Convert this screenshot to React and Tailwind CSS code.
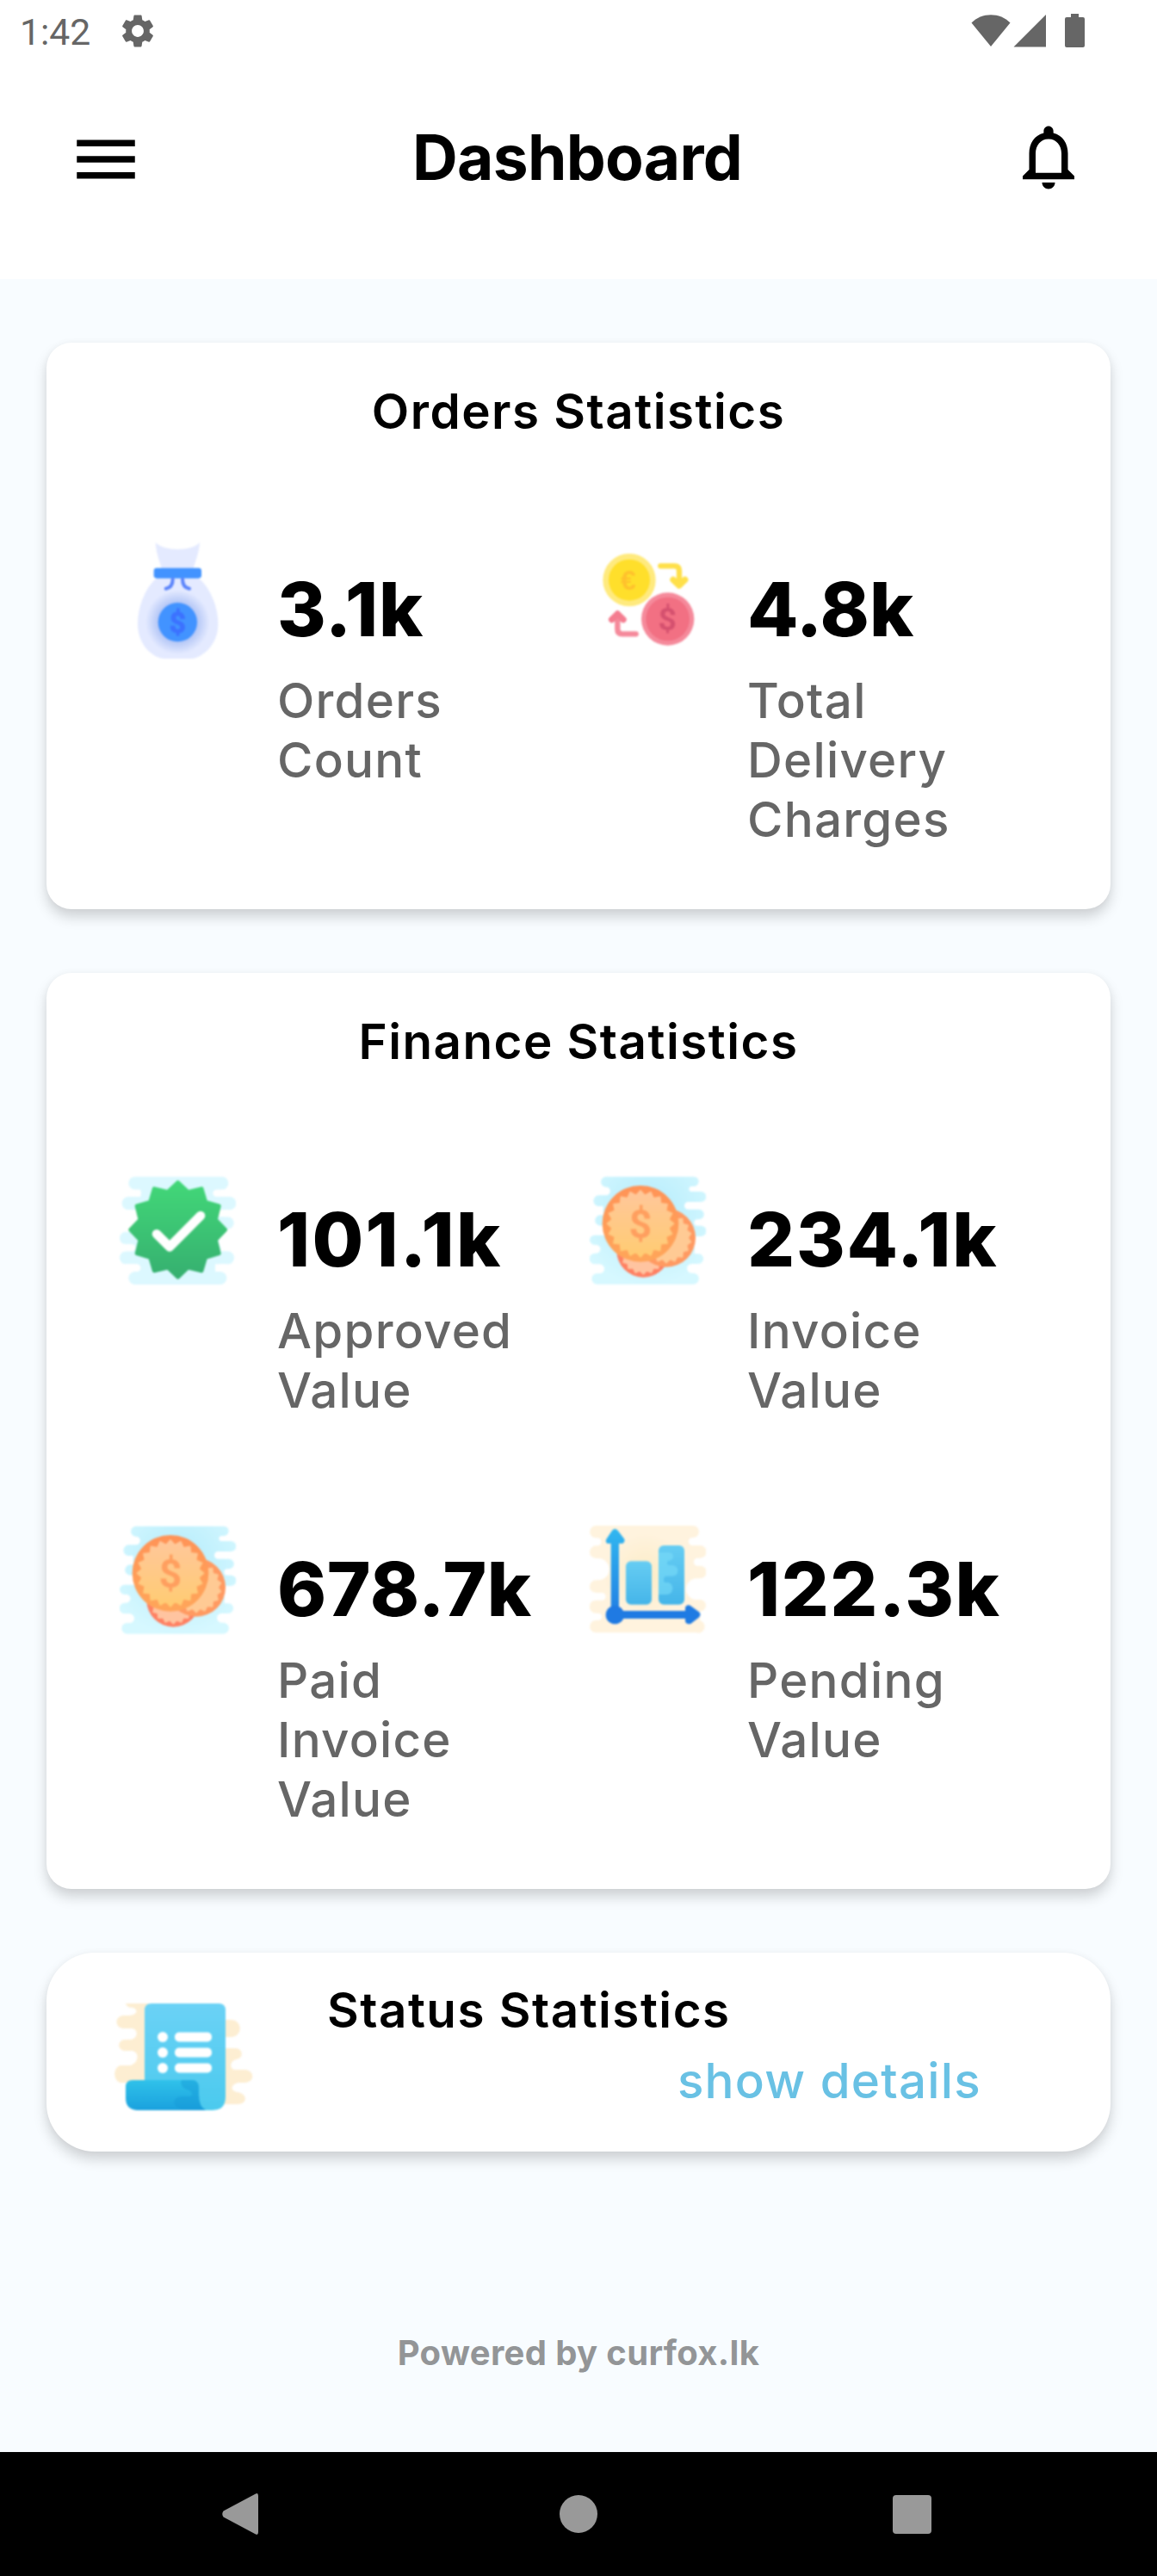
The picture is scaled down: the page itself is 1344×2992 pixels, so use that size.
import React from "react";
import { MdSettings, MdMenu, MdNotificationsNone } from "react-icons/md";

function starburst(cx, cy, outer, inner, teeth) {
  const points = [];
  for (let i = 0; i < teeth * 2; i++) {
    const r = i % 2 === 0 ? outer : inner;
    const a = (Math.PI * i) / teeth - Math.PI / 2;
    points.push(`${(cx + r * Math.cos(a)).toFixed(1)},${(cy + r * Math.sin(a)).toFixed(1)}`);
  }
  return points.join(" ");
}

/* Horizontal rounded bars [x1, x2, y1, y2] that form the wavy backdrop of an icon. */
function Bars({ bars, fill }) {
  return bars.map(([x1, x2, y1, y2], i) => (
    <rect key={i} x={x1} y={y1} width={x2 - x1} height={y2 - y1} rx={(y2 - y1) / 2} fill={fill} />
  ));
}

function MoneyBagIcon() {
  return (
    <svg viewBox="27 60 405 405" className="size-[135px] blur-[0.8px]">
      <defs>
        <radialGradient id="bagGlow" cx="229" cy="338" r="112" gradientUnits="userSpaceOnUse">
          <stop offset="0.6" stopColor="#b3c6f6" />
          <stop offset="1" stopColor="#e4eaff" />
        </radialGradient>
      </defs>
      <path d="M152 60C178 92 282 92 306 60C304 100 288 130 282 160H176C168 130 154 100 152 60Z" fill="#e4eaff" />
      <path d="M158 182H300C340 215 370 280 370 345C370 420 310 466 270 466H190C145 466 90 420 90 345C90 280 118 215 158 182Z" fill="#e4eaff" />
      <circle cx="229" cy="338" r="112" fill="url(#bagGlow)" />
      <rect x="146" y="149" width="166" height="36" rx="10" fill="#4293ff" />
      <path d="M212 188C212 208 204 218 188 221M246 188C246 208 254 218 270 221" fill="none" stroke="#5b84fb" strokeWidth="12" strokeLinecap="round" />
      <circle cx="229" cy="338" r="68" fill="#4293ff" />
      <text x="229" y="374" textAnchor="middle" fontFamily="Roboto" fontWeight="700" fontSize="100" fill="#3c72ff" stroke="#3c72ff" strokeWidth="3">$</text>
    </svg>
  );
}

function ExchangeIcon() {
  return (
    <svg viewBox="15 30 405 405" className="size-[135px] blur-[0.8px]">
      <circle cx="153" cy="161" r="92" fill="#ffea7e" />
      <circle cx="153" cy="161" r="72" fill="#ffdf2b" />
      <text x="150" y="195" textAnchor="middle" fontFamily="Liberation Sans" fontWeight="700" fontSize="96" fill="#ffc12c">€</text>
      <path d="M262 112H310Q327 112 327 129V176" fill="none" stroke="#ffe04a" strokeWidth="19" strokeLinecap="round" />
      <path d="M306 160L327 180L347 160" fill="none" stroke="#ffe04a" strokeWidth="22" strokeLinecap="round" strokeLinejoin="round" />
      <circle cx="287" cy="297" r="92" fill="#f58a9b" />
      <circle cx="287" cy="297" r="76" fill="#f27083" />
      <text x="286" y="336" textAnchor="middle" fontFamily="Roboto" fontWeight="700" fontSize="112" fill="#d5516f">$</text>
      <path d="M176 349H128Q112 349 112 333V282" fill="none" stroke="#f58a9b" strokeWidth="19" strokeLinecap="round" />
      <path d="M92 299L112 279L132 299" fill="none" stroke="#f47d90" strokeWidth="22" strokeLinecap="round" strokeLinejoin="round" />
    </svg>
  );
}

function ApprovedIcon() {
  return (
    <svg viewBox="57 66 405 405" className="size-[135px] blur-[0.8px]">
      <defs>
        <linearGradient id="sealFill" x1="0" y1="0" x2="0" y2="1">
          <stop offset="0" stopColor="#42d778" />
          <stop offset="1" stopColor="#36b070" />
        </linearGradient>
      </defs>
      <path d="M120 82H400V150H385V222H410V345H390V454H120V380H100V310H125V190H130V120H120Z" fill="#dcf8ff" />
      <Bars
        fill="#dcf8ff"
        bars={[
          [88, 436, 80, 125],
          [65, 463, 150, 196],
          [300, 455, 220, 263],
          [57, 300, 272, 316],
          [57, 456, 340, 385],
          [88, 430, 411, 456],
        ]}
      />
      <Bars fill="#ffffff" bars={[[90, 132, 125, 150], [382, 430, 125, 150], [60, 118, 196, 272], [412, 462, 196, 220], [402, 460, 263, 340], [60, 112, 316, 340], [60, 130, 385, 411], [392, 440, 385, 411]]} />
      <polygon points={starburst(260, 265, 165, 136, 12)} fill="url(#sealFill)" stroke="url(#sealFill)" strokeWidth="14" strokeLinejoin="round" />
      <path d="M186 280L231 325L339 216" fill="none" stroke="#fff" strokeWidth="32" strokeLinecap="round" strokeLinejoin="round" />
    </svg>
  );
}

function CoinsIcon() {
  return (
    <svg viewBox="75 66 405 405" className="size-[135px] blur-[0.8px]">
      <defs>
        <radialGradient id="coinSky" cx="280" cy="200" r="260" gradientUnits="userSpaceOnUse">
          <stop offset="0" stopColor="#b4ecfc" />
          <stop offset="1" stopColor="#d6f8ff" />
        </radialGradient>
        <linearGradient id="coinRing" x1="0" y1="0" x2="0" y2="1">
          <stop offset="0" stopColor="#ff9357" />
          <stop offset="1" stopColor="#ffa65a" />
        </linearGradient>
        <linearGradient id="coinFace" x1="0" y1="0" x2="0" y2="1">
          <stop offset="0" stopColor="#ffc79b" />
          <stop offset="1" stopColor="#ffcc72" />
        </linearGradient>
      </defs>
      <path
        d="M132 80H438A16 16 0 0 1 438 114H430A9 9 0 0 0 430 132H463A18 18 0 0 1 463 168H418A12 12 0 0 0 418 194H456A17 17 0 0 1 456 229H450A11 11 0 0 0 450 251H463A18 18 0 0 1 463 288H440V349H454A17 17 0 0 1 454 384H430A16 16 0 0 0 430 416H436A19 19 0 0 1 436 455H101A19 19 0 0 1 101 417H110A16 16 0 0 0 110 385H93A18 18 0 0 1 93 347H98A14 14 0 0 0 98 318H92A17 17 0 0 1 92 284H130V251H112A18 18 0 0 1 112 214H122V183H107A19 19 0 0 1 107 145H132A14 14 0 0 0 132 116A18 18 0 0 1 132 80Z"
        fill="url(#coinSky)"
      />
      <circle cx="262" cy="338" r="93" fill="#ff8163" />
      <polygon points={starburst(262, 338, 84, 73, 18)} fill="#ffc4a0" />
      <circle cx="342" cy="293" r="102" fill="#ff9a62" />
      <polygon points={starburst(342, 293, 90, 78, 18)} fill="#ffca94" />
      <circle cx="252" cy="244" r="133" fill="url(#coinRing)" />
      <polygon points={starburst(252, 244, 116, 100, 20)} fill="url(#coinFace)" stroke="url(#coinFace)" strokeWidth="4" strokeLinejoin="round" />
      <text x="252" y="294" textAnchor="middle" fontFamily="Roboto" fontWeight="700" fontSize="140" fill="#ff9f5f">$</text>
    </svg>
  );
}

function ChartIcon() {
  return (
    <svg viewBox="75 84 405 405" className="size-[135px] blur-[0.8px]">
      <defs>
        <radialGradient id="chartSand" cx="270" cy="270" r="210" gradientUnits="userSpaceOnUse">
          <stop offset="0" stopColor="#fcecc6" />
          <stop offset="0.7" stopColor="#fff3de" />
          <stop offset="1" stopColor="#fff3de" />
        </radialGradient>
        <linearGradient id="axisFill" x1="0" y1="105" x2="0" y2="440" gradientUnits="userSpaceOnUse">
          <stop offset="0" stopColor="#32b8f0" />
          <stop offset="1" stopColor="#1f78e2" />
        </linearGradient>
        <linearGradient id="barFill" x1="0" y1="0" x2="0" y2="1">
          <stop offset="0" stopColor="#66cdf3" />
          <stop offset="1" stopColor="#45b5e9" />
        </linearGradient>
      </defs>
      <path
        d="M97 96H435A21 21 0 0 1 435 138H430A14 14 0 0 0 430 165H460A22 22 0 0 1 460 209H448A14 14 0 0 0 448 236H460A22 22 0 0 1 460 280H448A36 36 0 0 0 448 354H460A20 20 0 0 1 460 394V427A21 21 0 0 1 448 469H97A21 21 0 0 1 97 426H105A12 12 0 0 0 105 401H97A22 22 0 0 1 97 356H118A13 13 0 0 0 118 330H97A22 22 0 0 1 97 286H105A37 37 0 0 0 105 210H97A22 22 0 0 1 97 166H105A14 14 0 0 0 105 139H97A21 21 0 0 1 97 96Z"
        fill="url(#chartSand)"
      />
      <path d="M149 390V158H136Q128 152 134 142L154 112Q163 102 172 112L195 142Q200 152 190 158H177V390Z" fill="url(#axisFill)" />
      <circle cx="163" cy="407" r="32" fill="#1f7ae3" />
      <path d="M180 393H408V382Q412 370 425 374L455 396Q466 405 455 416L427 438Q412 442 408 430V420H180Z" fill="#1f7be3" />
      <rect x="201" y="220" width="90" height="151" rx="18" fill="url(#barFill)" />
      <rect x="315" y="165" width="90" height="206" rx="18" fill="url(#barFill)" />
      <path d="M315 190H352Q366 192 366 204Q366 217 350 218Q340 222 348 234H366Q382 238 382 253Q382 270 364 272H340Q328 278 336 294H348Q364 298 364 316Q362 334 346 336H315Z" fill="#7adcf8" opacity="0.6" />
    </svg>
  );
}

function ReportIcon() {
  return (
    <svg viewBox="0 0 161 124" className="h-[124px] w-[161px] blur-[0.8px]">
      <defs>
        <linearGradient id="paperFill" x1="0" y1="0" x2="0" y2="1">
          <stop offset="0" stopColor="#6bd2f6" />
          <stop offset="1" stopColor="#4bcaee" />
        </linearGradient>
        <linearGradient id="rollFill" x1="0" y1="0" x2="0" y2="1">
          <stop offset="0" stopColor="#30c2ea" />
          <stop offset="1" stopColor="#1aa1de" />
        </linearGradient>
      </defs>
      <path
        d="M13 0H40V92H7C-2 90 -2 74 7 72H18C28 70 30 56 20 55H12C3 54 3 43 12 42H18C28 41 28 30 20 29H10C0 28 0 15 10 14H18C26 13 28 8 22 5Q14 5 13 0Z"
        fill="#fdeed2"
      />
      <path
        d="M124 19H136C149 20 149 38 136 39H129V52H141C150 53 150 64 141 65C134 67 133 76 140 77H152C163 78 163 91 152 92H144C135 94 134 101 142 103C155 104 155 117 143 117H124Z"
        fill="#fdeed2"
      />
      <path d="M35 8Q35 0 43 0H121Q129 0 129 8V108Q129 124 114 124H90L35 95Z" fill="url(#paperFill)" />
      <path d="M13 97Q13 89 21 89H90Q98 89 98 98V106Q98 120 106 124H26Q13 123 13 110Z" fill="url(#rollFill)" />
      <path d="M78 89H90Q98 89 98 98V106Q98 120 106 124H80C66 120 66 109 78 108H88C92 106 90 101 84 100C78 98 76 92 78 89Z" fill="#1799d8" opacity="0.45" />
      {[39, 57, 75].map((y) => (
        <g key={y} fill="#fff">
          <circle cx="56" cy={y} r="6" />
          <rect x="70" y={y - 5.5} width="43" height="11" rx="5" />
        </g>
      ))}
    </svg>
  );
}

function StatusBar() {
  return (
    <div className="flex h-[78px] items-start pt-[12px] pl-[23px] text-[#666666]">
      <span className="w-[83px] font-[Roboto] text-[42.7px] leading-[51px]">1:42</span>
      <MdSettings className="mt-px ml-[31px] size-[46px]" />
      <svg viewBox="0 0 132 40" className="mt-[4px] mr-[84px] ml-auto h-[40px] w-[132px]" fill="currentColor">
        <path d="M0.500 10.500C12 -2 34 -2 45.500 10.500L23 38Z" />
        <path d="M87 1V38.500H49.500Z" />
        <path d="M116 0H125V4H130Q132 4 132 6V37Q132 39 130 39H111Q109 39 109 37V6Q109 4 111 4H116Z" />
      </svg>
    </div>
  );
}

function Header() {
  return (
    <header className="h-[324px] bg-white">
      <StatusBar />
      <div className="flex items-start justify-between pr-[81px] pl-[78px] pt-[59px]">
        <MdMenu className="mt-[3px] size-[90px] text-black" />
        <h1 className="mt-[2px] text-[73px] leading-[88px] font-bold tracking-[-0.7px]">Dashboard</h1>
        <MdNotificationsNone className="size-[90px] text-black" />
      </div>
    </header>
  );
}

function Stat({ icon: Icon, value, tracking, lines }) {
  return (
    <div className="flex items-start">
      <Icon />
      <div className="pt-[26px] pl-[48px]">
        <div className={`text-[86.5px] leading-[104px] font-extrabold ${tracking}`}>{value}</div>
        <div className="mt-[19px] text-[56.5px] leading-[69px] font-medium tracking-[1.25px] text-[#666666]">
          {lines.map((line) => (
            <div key={line} className="whitespace-nowrap">{line}</div>
          ))}
        </div>
      </div>
    </div>
  );
}

const cardShadow = "shadow-[0_9px_15px_rgba(0,0,0,0.17),0_0_8px_rgba(0,0,0,0.03)]";

function StatCard({ title, stats }) {
  return (
    <section className={`rounded-[29px] bg-white pt-[45px] ${cardShadow}`}>
      <h2 className="text-center text-[56.5px] leading-[69px] font-semibold tracking-[1.5px]">{title}</h2>
      <div className="mt-[69px] grid grid-cols-[546px_546px] pl-[85px]">
        {stats.map((stat) => (
          <div key={stat.lines.join(" ")} className="pt-[49px] pb-[70px]">
            <Stat {...stat} />
          </div>
        ))}
      </div>
    </section>
  );
}

const orders = [
  { icon: MoneyBagIcon, value: "3.1k", tracking: "tracking-[0.7px]", lines: ["Orders", "Count"] },
  { icon: ExchangeIcon, value: "4.8k", tracking: "tracking-[0px]", lines: ["Total", "Delivery", "Charges"] },
];

const finance = [
  { icon: ApprovedIcon, value: "101.1k", tracking: "tracking-[2.2px]", lines: ["Approved", "Value"] },
  { icon: CoinsIcon, value: "234.1k", tracking: "tracking-[1.8px]", lines: ["Invoice", "Value"] },
  { icon: CoinsIcon, value: "678.7k", tracking: "tracking-[0.5px]", lines: ["Paid", "Invoice", "Value"] },
  { icon: ChartIcon, value: "122.3k", tracking: "tracking-[1.5px]", lines: ["Pending", "Value"] },
];

export default function App() {
  return (
    <div className="flex h-[2992px] w-[1344px] flex-col bg-[#f8fcff] font-[Inter] text-black">
      <Header />
      <main className="flex flex-1 flex-col gap-[74px] px-[54px] pt-[74px]">
        <StatCard title="Orders Statistics" stats={orders} />
        <StatCard title="Finance Statistics" stats={finance} />
        <section className={`flex h-[231px] items-start rounded-[56px] bg-white pl-[79px] ${cardShadow}`}>
          <div className="pt-[59px]">
            <ReportIcon />
          </div>
          <div className="ml-[86px] w-[760px] pt-[32px] text-[56.5px] leading-[69px]">
            <h2 className="font-semibold tracking-[1.5px]">Status Statistics</h2>
            <div className="mt-[13px] text-right font-medium tracking-[1.25px] text-[#69c1e4]">show details</div>
          </div>
        </section>
        <footer className="mt-[136px] text-center text-[40px] leading-[48px] font-bold tracking-[0.35px] text-[#939597]">Powered by curfox.lk</footer>
      </main>
      <nav className="flex h-[144px] items-center bg-black pl-[258px]">
        <svg viewBox="0 0 42 48" className="h-[48px] w-[42px]" fill="#999999">
          <path d="M1.500 20.500Q-1 24 1.500 27.500L39 47.500Q42 49 42 45V3Q42 -1 39 0.500Z" />
        </svg>
        <div className="ml-[350px] size-[44px] rounded-full bg-[#999999]" />
        <div className="ml-[343px] size-[45px] rounded-[4px] bg-[#999999]" />
      </nav>
    </div>
  );
}
